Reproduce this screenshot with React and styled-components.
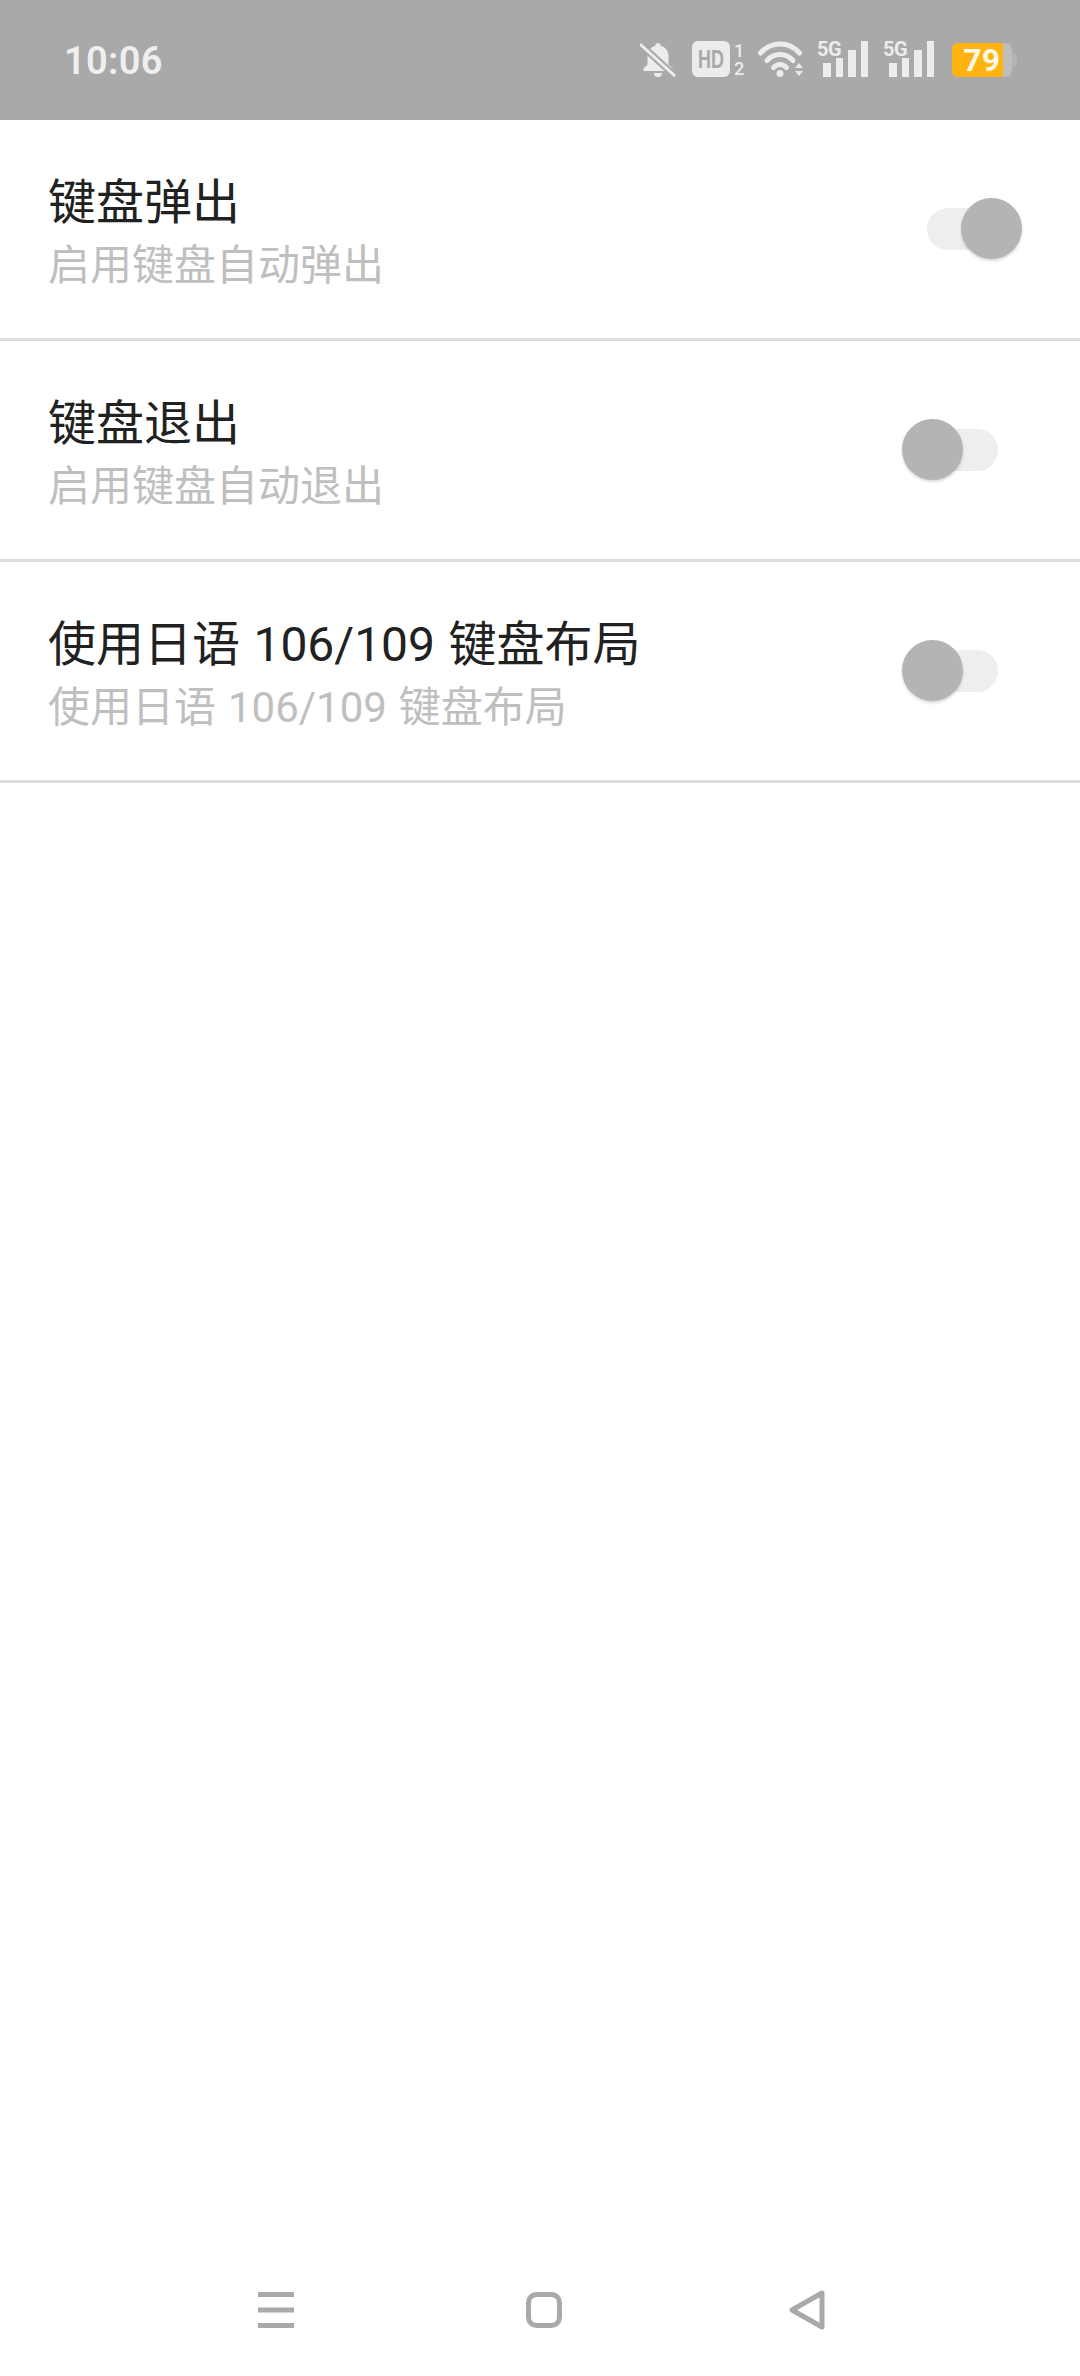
import React from 'react';
import styled, { createGlobalStyle } from 'styled-components';

const GlobalStyle = createGlobalStyle`
    html, body {
        margin: 0;
        padding: 0;
        background: #fff;
    }
    * {
        box-sizing: border-box;
    }
`

const Page = styled.div`
    width: 1080px;
    height: 2376px;
    display: flex;
    flex-direction: column;
    overflow: hidden;
    background: #fff;
    font-family: Roboto, "Noto Sans CJK SC", sans-serif;
`

const StatusBar = styled.div`
    height: 120px;
    flex: none;
    display: flex;
    align-items: center;
    padding: 0 63px 0 64px;
    background: #a9a9a9;
    color: #efefef;
`

const Time = styled.div`
    margin-top: 2px;
    font-family: Roboto, sans-serif;
    font-size: 38px;
    font-weight: 600;
    letter-spacing: 0.3px;
`

const StatusIcons = styled.div`
    margin-left: auto;
    margin-bottom: 2px;
    display: flex;
    align-items: center;
    height: 38px;
`

const Bell = styled.svg`
    width: 36px;
    height: 36px;
    margin-right: 16px;
`

const HdBox = styled.div`
    width: 38px;
    height: 36px;
    display: flex;
    align-items: center;
    justify-content: center;
    border-radius: 6px;
    background: #ececec;
    color: #a9a9a9;
    font-family: "Liberation Sans", sans-serif;
    font-size: 25px;
    font-weight: 700;
`

const HdText = styled.span`
    display: inline-block;
    transform: scaleX(0.72);
`

const SimSlots = styled.div`
    width: 8px;
    margin: 0 15px 0 5px;
    display: flex;
    flex-direction: column;
    align-items: center;
    gap: 1px;
    font-family: Roboto, sans-serif;
    font-size: 18px;
    font-weight: 500;
    line-height: 17px;
    color: #ececec;
`

const Wifi = styled.svg`
    width: 45px;
    height: 38px;
    margin-right: 14px;
`

const Signal = styled.div`
    position: relative;
    width: 51px;
    height: 36px;
    margin-right: ${(p) => p.$gap}px;
`

const SignalLabel = styled.span`
    position: absolute;
    left: 0;
    top: -2px;
    font-family: Roboto, sans-serif;
    font-size: 20px;
    line-height: 20px;
    font-weight: 700;
    letter-spacing: -0.5px;
    color: #ececec;
`

const SignalBars = styled.svg`
    display: block;
    width: 51px;
    height: 36px;
`

const Battery = styled.div`
    display: flex;
    align-items: center;
    width: 65px;
    height: 34px;
    margin-top: 2px;
`

const BatteryBody = styled.div`
    width: 60px;
    height: 34px;
    border-radius: 6px;
    background: #bdbdbd;
`

const BatteryLevel = styled.div`
    width: 51px;
    height: 34px;
    border-radius: 6px 0 0 6px;
    background: #ffb30f;
    color: #fff8e6;
    font-family: Roboto, sans-serif;
    font-size: 32px;
    font-weight: 700;
    line-height: 34px;
    white-space: nowrap;
    text-align: right;
    padding-right: 3px;
`

const BatteryNub = styled.div`
    width: 5px;
    height: 14px;
    border-radius: 0 3px 3px 0;
    background: #b4b4b4;
`

const List = styled.div`
    display: flex;
    flex-direction: column;
`

const Row = styled.div`
    height: 221px;
    display: flex;
    align-items: center;
    justify-content: space-between;
    padding: 0 82px 0 48px;
    border-bottom: 3px solid #dddddd;
`

const Texts = styled.div`
    display: flex;
    flex-direction: column;
    padding-top: 3px;
    word-spacing: 1.5px;
`

const Title = styled.div`
    font-size: 48px;
    line-height: 70px;
    color: #212121;
`

const Sub = styled.div`
    font-size: 42px;
    line-height: 56px;
    color: #bfbfbf;
`

const Track = styled.div`
    position: relative;
    width: 71px;
    height: 42px;
    border-radius: 21px;
    background: #eeeeee;
`

const Thumb = styled.div`
    position: absolute;
    top: -10px;
    left: ${(p) => (p.$on ? '34px' : '-25px')};
    width: 61px;
    height: 61px;
    border-radius: 50%;
    background: #b4b4b4;
    box-shadow: 0 2px 3px rgba(0, 0, 0, 0.15);
`

const NavBar = styled.div`
    margin-top: auto;
    height: 106px;
    flex: none;
    display: grid;
    grid-template-columns: 268px 263px auto;
    align-items: center;
    padding: 0 0 26px 258px;
`

const NavIcon = styled.svg`
    display: block;
    width: 36px;
    height: ${(p) => p.$h || 36}px;
    fill: none;
    stroke: #a9a9a9;
    stroke-width: 5px;
`

const rows = [
    { title: '键盘弹出', sub: '启用键盘自动弹出', on: true },
    { title: '键盘退出', sub: '启用键盘自动退出', on: false },
    { title: '使用日语 106/109 键盘布局', sub: '使用日语 106/109 键盘布局', on: false },
];

const SignalIcon = ({ gap }) => (
    <Signal $gap={gap}>
        <SignalLabel>5G</SignalLabel>
        <SignalBars viewBox="0 0 51 36" fill="#ececec">
            <rect x="6" y="22" width="8" height="14" />
            <rect x="19" y="17" width="7" height="19" />
            <rect x="31" y="9" width="8" height="27" />
            <rect x="44" y="0" width="7" height="36" />
        </SignalBars>
    </Signal>
);

const App = () => (
    <Page>
        <GlobalStyle />
        <StatusBar>
            <Time>10:06</Time>
            <StatusIcons>
                <Bell viewBox="0 0 36 36">
                    <path
                        fill="#ececec"
                        d="M18 2c-1.6 0-2.8 1.2-2.8 2.8C10 6.2 7.500 10.500 7.500 15.500v8L3.500 27.500V30h29v-2.500l-4-4v-8c0-5-2.500-9.300-7.700-10.700C20.800 3.200 19.600 2 18 2zM14 32h8a4 4 0 0 1-8 0z"
                    />
                    <line x1="0" y1="3" x2="35" y2="35" stroke="#a9a9a9" strokeWidth="7" />
                    <line x1="0" y1="3" x2="35" y2="35" stroke="#ececec" strokeWidth="3" />
                </Bell>
                <HdBox>
                    <HdText>HD</HdText>
                </HdBox>
                <SimSlots>
                    <span>1</span>
                    <span>2</span>
                </SimSlots>
                <Wifi viewBox="0 0 45 38">
                    <g fill="none" stroke="#ececec" strokeWidth="5" strokeLinecap="round">
                        <path d="M2.500 13C13 1 31 1 41.500 13" />
                        <path d="M9 20.500C16 12.500 28 12.500 35 20.500" />
                        <path d="M15.500 27.500C19.500 23.500 24.500 23.500 28.500 27.500" />
                    </g>
                    <circle cx="22" cy="33.500" r="3.500" fill="#ececec" />
                    <path fill="#ececec" d="M41 23l4 5h-8zM37 31h8l-4 5z" />
                </Wifi>
                <SignalIcon gap={15} />
                <SignalIcon gap={18} />
                <Battery>
                    <BatteryBody>
                        <BatteryLevel>79</BatteryLevel>
                    </BatteryBody>
                    <BatteryNub />
                </Battery>
            </StatusIcons>
        </StatusBar>
        <List>
            {rows.map((el) => (
                <Row key={el.title}>
                    <Texts>
                        <Title>{el.title}</Title>
                        <Sub>{el.sub}</Sub>
                    </Texts>
                    <Track>
                        <Thumb $on={el.on} />
                    </Track>
                </Row>
            ))}
        </List>
        <NavBar>
            <NavIcon viewBox="0 0 36 36">
                <path d="M0 2.500h36M0 18h36M0 33.500h36" />
            </NavIcon>
            <NavIcon viewBox="0 0 36 36">
                <rect x="2.500" y="2.500" width="31" height="31" rx="8" />
            </NavIcon>
            <NavIcon viewBox="0 0 36 40" $h={40}>
                <path strokeLinejoin="round" d="M33 3L3 20l30 17z" />
            </NavIcon>
        </NavBar>
    </Page>
);

export default App;
